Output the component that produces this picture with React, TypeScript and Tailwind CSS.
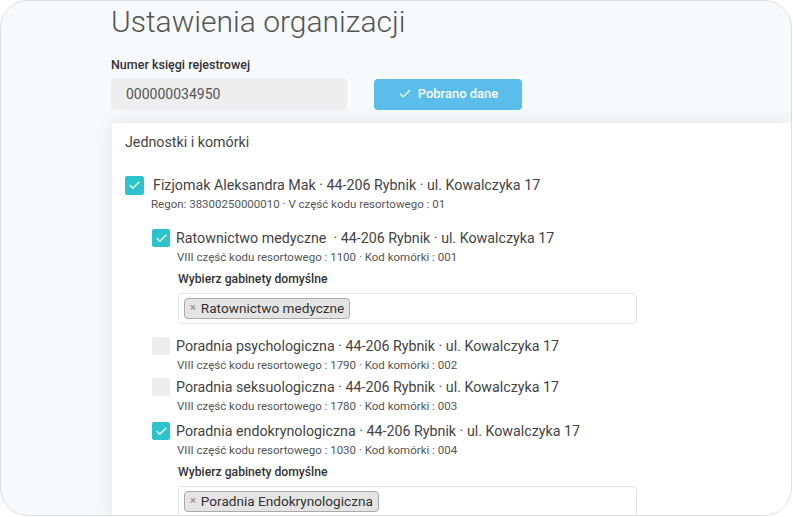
import React from 'react';
import { Check } from 'lucide-react';

type Unit = {
  name: string;
  sub: string;
  checked: boolean;
  gabinet?: string;
  spacing: string;
};

const units: Unit[] = [
  {
    name: 'Ratownictwo medyczne  · 44-206 Rybnik · ul. Kowalczyka 17',
    sub: 'VIII część kodu resortowego : 1100 · Kod komórki : 001',
    checked: true,
    gabinet: 'Ratownictwo medyczne',
    spacing: 'mt-[14px]',
  },
  {
    name: 'Poradnia psychologiczna · 44-206 Rybnik · ul. Kowalczyka 17',
    sub: 'VIII część kodu resortowego : 1790 · Kod komórki : 002',
    checked: false,
    spacing: 'mt-[12px]',
  },
  {
    name: 'Poradnia seksuologiczna · 44-206 Rybnik · ul. Kowalczyka 17',
    sub: 'VIII część kodu resortowego : 1780 · Kod komórki : 003',
    checked: false,
    spacing: 'mt-[2px]',
  },
  {
    name: 'Poradnia endokrynologiczna · 44-206 Rybnik · ul. Kowalczyka 17',
    sub: 'VIII część kodu resortowego : 1030 · Kod komórki : 004',
    checked: true,
    gabinet: 'Poradnia Endokrynologiczna',
    spacing: 'mt-[5px]',
  },
];

const Box = ({ checked, size }: { checked: boolean; size: string }) => (
  <span
    className={`${size} shrink-0 flex items-center justify-center rounded-[2px] ${
      checked ? 'bg-[#2dc3cc]' : 'bg-[#eeeeee]'
    }`}
  >
    {checked && <Check size={13} strokeWidth={2.4} className="text-white" />}
  </span>
);

const App: React.FC = () => {
  return (
    <div className="w-[793px] h-[517px] bg-white font-['Roboto',sans-serif]">
      <div className="w-[792px] h-[516px] rounded-[28px] border border-[#dedfe1] bg-[#f7fafc] overflow-hidden pl-[110px]">
        <h1 className="text-[30px] font-light text-[#555] leading-[40px] mt-[1px]">
          Ustawienia organizacji
        </h1>

        <label className="block mt-[15px] text-[12.5px] font-medium text-[#333] leading-[16px]">
          Numer księgi rejestrowej
        </label>
        <div className="flex items-center mt-[5px]">
          <div className="w-[236px] h-[32px] rounded-[4px] bg-[#eeeeee] pl-[15px] flex items-center text-[14px] text-[#555]">
            000000034950
          </div>
          <button className="ml-[27px] w-[148px] h-[31px] rounded-[4px] bg-[#5bbde9] text-white text-[13px] font-medium flex items-center justify-center gap-[6px]">
            <Check size={14} strokeWidth={2} />
            Pobrano dane
          </button>
        </div>

        <div className="mt-[13px] ml-[1px] h-[400px] bg-white rounded-tl-[3px] shadow-[0_0_18px_rgba(60,70,80,0.12)] pl-[13px] pt-[9px]">
          <div className="text-[14.25px] text-[#444] leading-[20px]">Jednostki i komórki</div>

          <div className="flex items-start mt-[23px]">
            <span className="mt-[1px]">
              <Box checked size="w-[19px] h-[19px]" />
            </span>
            <div className="ml-[9px]">
              <div className="text-[14.25px] text-[#444] leading-[20px]">
                Fizjomak Aleksandra Mak · 44-206 Rybnik · ul. Kowalczyka 17
              </div>
              <div className="-ml-[2px] text-[11.5px] text-[#555] leading-[19px]">
                Regon: 38300250000010 · V część kodu resortowego : 01
              </div>
            </div>
          </div>

          <div className="pl-[27px]">
            {units.map((u) => (
              <div key={u.sub} className={u.spacing}>
                <div className="flex items-start">
                  <span className="mt-[1px]">
                    <Box checked={u.checked} size="w-[18px] h-[18px]" />
                  </span>
                  <div className="ml-[6px]">
                    <div className="text-[14.25px] text-[#444] leading-[20px] whitespace-pre">{u.name}</div>
                    <div className="ml-[1px] text-[11.5px] text-[#555] leading-[19px]">{u.sub}</div>
                  </div>
                </div>
                {u.gabinet && (
                  <div className="pl-[26px]">
                    <div className="mt-[4px] text-[12.2px] font-medium text-[#333] leading-[16px]">
                      Wybierz gabinety domyślne
                    </div>
                    <div className="mt-[6px] w-[459px] h-[31px] border border-[#e3e3e3] rounded-[4px] pl-[5px] flex items-center">
                      <span className="h-[21px] flex items-center gap-[5px] px-[5px] bg-[#e4e4e4] border border-[#aaaaaa] rounded-[4px] text-[13.6px] text-[#333]">
                        <span className="text-[11px] font-bold text-[#999]">×</span>
                        {u.gabinet}
                      </span>
                    </div>
                  </div>
                )}
              </div>
            ))}
          </div>
        </div>
      </div>
    </div>
  );
};

export default App;
